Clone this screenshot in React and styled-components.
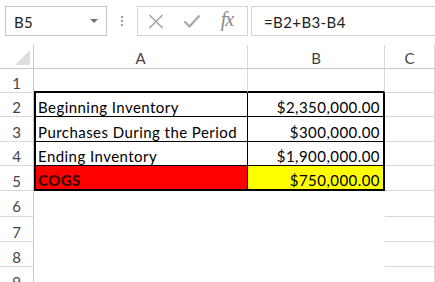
import React from "react";
import styled, { createGlobalStyle } from "styled-components";

const GlobalStyle = createGlobalStyle`
	html, body {
		margin: 0;
		padding: 0;
		background: #ffffff;
		overflow: hidden;
	}
	body {
		font-family: Lato, "Open Sans", sans-serif;
	}
`;

const GRID = "#d9d9d9";
const HEAD_LINE = "#c8c8c8";

const Page = styled.div`
	width: 435px;
	height: 282px;
	overflow: hidden;
	background: #ffffff;
`;

const Toolbar = styled.div`
	display: flex;
	align-items: flex-start;
	height: 45px;
	padding: 6px 0 0 5px;
	box-sizing: border-box;
`;

const NameBox = styled.div`
	width: 102px;
	height: 30px;
	box-sizing: border-box;
	border: 1px solid #c6c6c6;
	display: flex;
	align-items: center;
	justify-content: space-between;
	padding: 1px 8px 0 8px;
	font-size: 15px;
	letter-spacing: 0.4px;
	color: #222;
`;

const DropArrow = styled.span`
	width: 0;
	height: 0;
	border-left: 4px solid transparent;
	border-right: 4px solid transparent;
	border-top: 4px solid #6f6f6f;
	margin-bottom: 2px;
`;

const Grip = styled.div`
	width: 30px;
	height: 30px;
	display: flex;
	flex-direction: column;
	align-items: center;
	justify-content: center;
	gap: 2px;

	span {
		width: 2px;
		height: 2px;
		background: #9a9a9a;
	}
`;

const ButtonBox = styled.div`
	width: 111px;
	height: 30px;
	box-sizing: border-box;
	border: 1px solid #d4d4d4;
	display: flex;
	align-items: center;
`;

const FxButton = styled.div`
	width: 36px;
	height: 28px;
	display: flex;
	align-items: center;
	justify-content: center;
`;

const FxLabel = styled.span`
	font-family: "Liberation Serif", serif;
	font-style: italic;
	font-size: 20px;
	color: #8a8a8a;
	letter-spacing: -1px;
	padding: 0 2px 3px 0;
`;

const FormulaInput = styled.div`
	flex: 1;
	margin-left: 3px;
	height: 30px;
	box-sizing: border-box;
	border: 1px solid #d4d4d4;
	border-right: none;
	display: flex;
	align-items: center;
	padding: 1px 0 0 12px;
	font-size: 15px;
	letter-spacing: 0.4px;
	color: #222;
`;

const Sheet = styled.div`
	display: grid;
	grid-template-columns: 34px 214px 137px 1fr;
`;

const Corner = styled.div`
	height: 24px;
	box-sizing: border-box;
	border-right: 1px solid ${HEAD_LINE};
	border-bottom: 1px solid ${HEAD_LINE};
	position: relative;

	&::after {
		content: "";
		position: absolute;
		right: 3px;
		bottom: 3px;
		width: 0;
		height: 0;
		border-left: 15px solid transparent;
		border-bottom: 15px solid #dedede;
	}
`;

const ColHead = styled.div`
	height: 24px;
	box-sizing: border-box;
	border-right: 1px solid ${GRID};
	border-bottom: 1px solid ${HEAD_LINE};
	display: flex;
	align-items: center;
	justify-content: center;
	font-size: 15px;
	color: #444;
	padding-top: 2px;
`;

const RowHead = styled.div`
	height: ${(p) => p.$h}px;
	box-sizing: border-box;
	border-right: 1px solid ${HEAD_LINE};
	border-bottom: 1px solid ${GRID};
	display: flex;
	align-items: center;
	justify-content: center;
	padding-top: 5px;
	font-size: 15px;
	color: #444;
`;

const Cell = styled.div`
	height: ${(p) => p.$h}px;
	box-sizing: border-box;
	background: ${(p) => p.$fill || "#ffffff"};
	border-right: ${(p) => p.$right || `1px solid ${GRID}`};
	border-bottom: ${(p) => p.$bottom || `1px solid ${GRID}`};
	border-left: ${(p) => p.$left || "none"};
	display: flex;
	align-items: center;
	justify-content: ${(p) => (p.$num ? "flex-end" : "flex-start")};
	padding: 5px 3px 0 2px;
	font-size: 15px;
	letter-spacing: 0.45px;
	font-weight: ${(p) => (p.$bold ? 900 : 400)};
	color: ${(p) => p.$color || "#000"};
	white-space: nowrap;
	overflow: hidden;
`;

const THICK = "2px solid #000";
const THIN = "1px solid #000";
const BLANK = "1px solid transparent";

const rows = [
	{ n: 1, h: 24, a: { bottom: THICK }, b: { bottom: THICK } },
	{ n: 2, h: 24, a: { text: "Beginning Inventory", left: THICK, right: THIN, bottom: THIN }, b: { text: "$2,350,000.00", num: true, right: THICK, bottom: THIN } },
	{ n: 3, h: 25, a: { text: "Purchases During the Period", left: THICK, right: THIN, bottom: THIN }, b: { text: "$300,000.00", num: true, right: THICK, bottom: THIN } },
	{ n: 4, h: 24, a: { text: "Ending Inventory", left: THICK, right: THIN, bottom: THIN }, b: { text: "$1,900,000.00", num: true, right: THICK, bottom: THIN } },
	{ n: 5, h: 25, a: { text: "COGS", bold: true, color: "#3a0000", fill: "#ff0000", left: THICK, right: THIN, bottom: THICK }, b: { text: "$750,000.00", num: true, fill: "#ffff00", right: THICK, bottom: THICK } },
	{ n: 6, h: 26, a: { right: BLANK, bottom: BLANK }, b: { right: BLANK, bottom: BLANK } },
	{ n: 7, h: 25, a: { right: BLANK, bottom: BLANK }, b: { right: BLANK, bottom: BLANK } },
	{ n: 8, h: 25, a: { right: BLANK, bottom: BLANK }, b: { right: BLANK, bottom: BLANK } },
	{ n: 9, h: 25, a: { right: BLANK, bottom: BLANK }, b: { right: BLANK, bottom: BLANK } },
];

function SheetCell({ h, spec = {} }) {
	return (
		<Cell
			$h={h}
			$fill={spec.fill}
			$left={spec.left}
			$right={spec.right}
			$bottom={spec.bottom}
			$num={spec.num}
			$bold={spec.bold}
			$color={spec.color}>
			{spec.text}
		</Cell>
	);
}

export default function App() {
	return (
		<Page>
			<GlobalStyle />
			<Toolbar>
				<NameBox>
					B5
					<DropArrow />
				</NameBox>
				<Grip>
					<span />
					<span />
					<span />
				</Grip>
				<ButtonBox>
					<FxButton>
						<svg width="16" height="15" viewBox="0 0 16 15">
							<path d="M1.5 1 L14.5 14 M14.5 1 L1.5 14" stroke="#a8a8a8" strokeWidth="1.6" fill="none" />
						</svg>
					</FxButton>
					<FxButton>
						<svg width="18" height="14" viewBox="0 0 18 14">
							<path d="M1.5 7.5 L6.5 12.5 L16.5 1.5" stroke="#a8a8a8" strokeWidth="2.2" fill="none" />
						</svg>
					</FxButton>
					<FxButton>
						<FxLabel>fx</FxLabel>
					</FxButton>
				</ButtonBox>
				<FormulaInput>=B2+B3-B4</FormulaInput>
			</Toolbar>
			<Sheet>
				<Corner />
				<ColHead>A</ColHead>
				<ColHead>B</ColHead>
				<ColHead>C</ColHead>
				{rows.map((r) => (
					<React.Fragment key={r.n}>
						<RowHead $h={r.h}>{r.n}</RowHead>
						<SheetCell h={r.h} spec={r.a} />
						<SheetCell h={r.h} spec={r.b} />
						<SheetCell h={r.h} />
					</React.Fragment>
				))}
			</Sheet>
		</Page>
	);
}
